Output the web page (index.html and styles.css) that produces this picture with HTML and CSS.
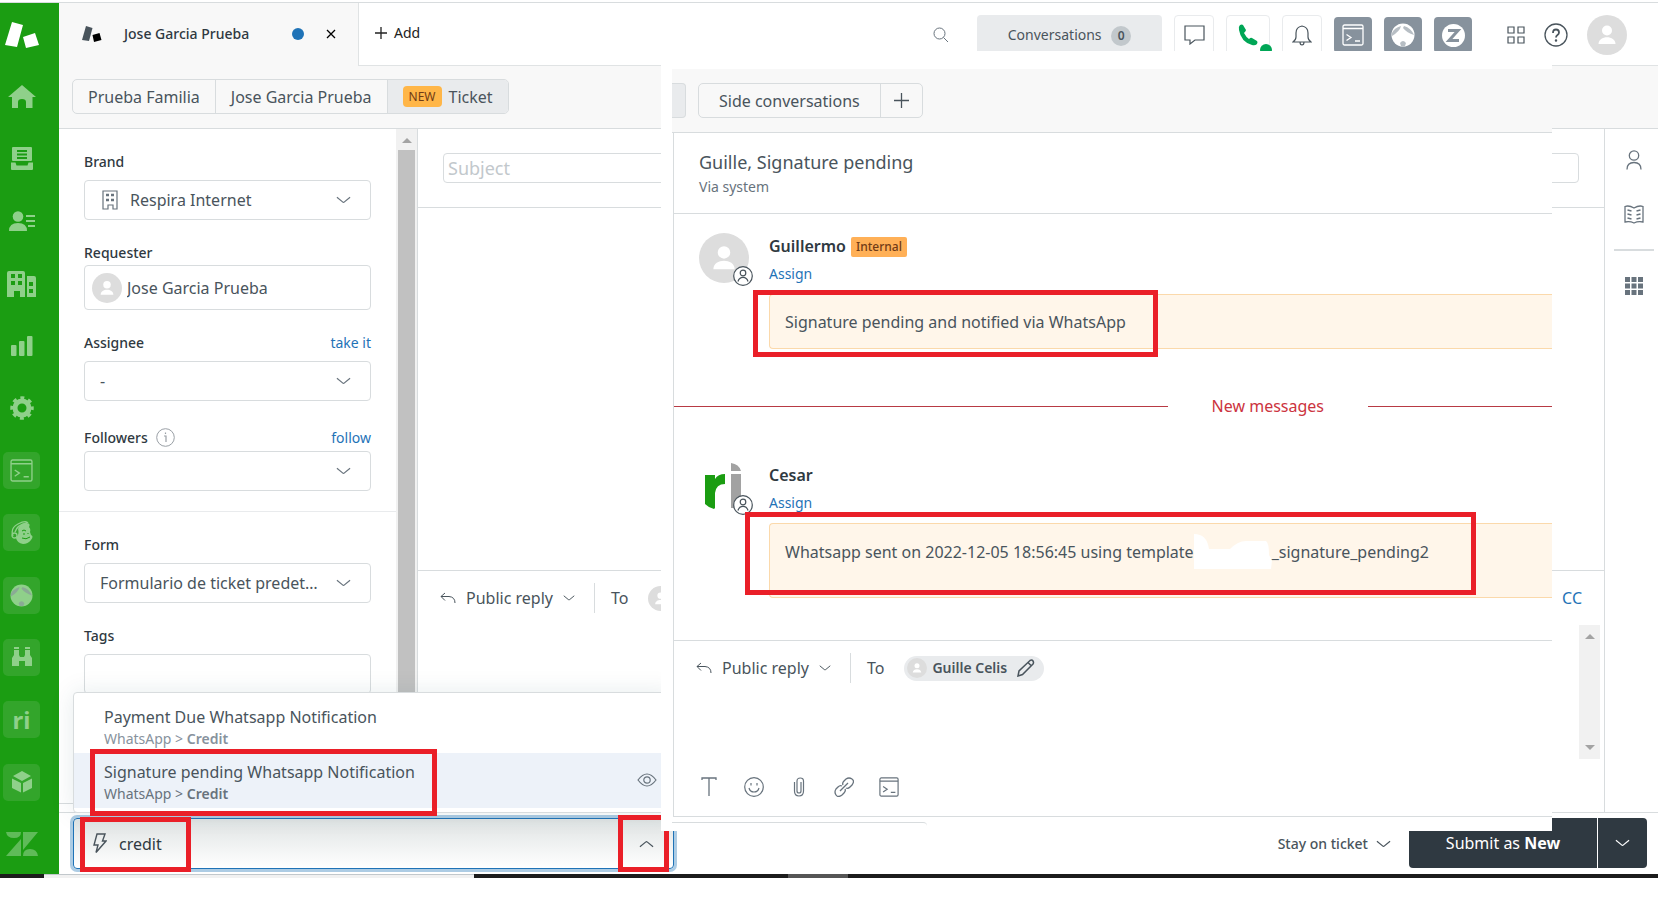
FILE: index.html
```html
<!DOCTYPE html>
<html lang="en">
<head>
  <meta charset="UTF-8" />
  <meta name="viewport" content="width=device-width, initial-scale=1.0"/>
  <title>Jose Garcia Prueba - Ticket</title>
  <link rel="stylesheet" href="styles.css">
</head>
<body>
  <!-- Shared icons -->
  <svg class="sprite" width="0" height="0">
    <symbol id="chevron" viewBox="0 0 16 8"><path d="M1 1 L7 6 Q8 7 9 6 L15 1" fill="none" stroke="currentColor" stroke-width="1.3"/></symbol>
    <symbol id="terminal" viewBox="0 0 22 22"><g fill="none" stroke="currentColor" stroke-width="1.3"><rect x="1" y="1" width="20" height="20" rx="1.5"/><path d="M1 4.500h20M4.500 10.500l4.500 3-4.500 3M13 17h5"/></g></symbol>
    <symbol id="person" viewBox="0 0 40 40"><circle cx="20" cy="20" r="20" fill="#ddd"/><circle cx="20" cy="15.500" r="5" fill="#fff"/><path d="M11.500 29c0-9 17-9 17 0z" fill="#fff"/></symbol>
    <symbol id="user" viewBox="0 0 20 20"><circle cx="10" cy="10" r="9.300" fill="#fff" stroke="#49545c" stroke-width="1.200"/><circle cx="10" cy="7" r="2.800" fill="none" stroke="#49545c" stroke-width="1.200"/><path d="M5 15.500c1.500-5.500 8.500-5.500 10 0" fill="none" stroke="#49545c" stroke-width="1.200"/></symbol>
    <symbol id="reply" viewBox="0 0 16 12"><path d="M5 1 L1 4.500 L5 8.500 M1 4.500 H9 Q15 5 15 11" fill="none" stroke="currentColor"/></symbol>
    <symbol id="globe" viewBox="0 0 24 24"><circle cx="12" cy="12" r="11.500" fill="currentColor"/><path d="M1 10 Q3 5 10 3 Q9 8 1 13zM13 3 Q20 5 23 12 Q16 10 12 5zM9 20q3-4 6 0l-1 3h-4z" class="globe-shade"/></symbol>
  </svg>

  <div class="app">
    <nav class="sidebar">
      <a href="#" class="logo" aria-label="Home"><svg width="34" height="26" viewBox="0 0 34 26" fill="#fff"><path d="M7 0L18 3 12 25 0 23zM18 15L30 11 34 23 21 26z"/></svg></a>
      <a href="#" aria-label="Dashboard"><svg width="28" height="24" viewBox="0 0 28 24" fill="currentColor"><path d="M14 0L28 12H24.500V23H18V17q0-3-4-3t-4 3v6H4V12H0z"/></svg></a>
      <a href="#" aria-label="Views"><svg width="22" height="24" viewBox="0 0 22 24" fill="currentColor"><path fill-rule="evenodd" d="M2 0h18q1 0 1 1v12q0 1-1 1H2q-1 0-1-1V1q0-1 1-1zM6 3v2h10V3zM6 6.500v2h10v-2zM6 10v2h10v-2zM0 15.500h4.500l1 3h11l1-3H22V22q0 1-1 1H1q-1 0-1-1z"/></svg></a>
      <a href="#" aria-label="Customers"><svg width="26" height="20" viewBox="0 0 26 20" fill="currentColor"><circle cx="9" cy="5.500" r="5.300"/><path d="M0 20q0-8 9-8t9 8zM17 4h9v2h-9zM17 9h9v2h-9zM19 14h7v2h-7z"/></svg></a>
      <a href="#" aria-label="Organizations"><svg width="30" height="26" viewBox="0 0 30 26" fill="currentColor"><path fill-rule="evenodd" d="M2 0h14q2 0 2 2v24h-5v-6H7v6H0V2q0-2 2-2zM4 3v4h4V3zM11 3v4h4V3zM4 10v4h4v-4zM11 10v4h4v-4zM20 5h7q2 0 2 2v19h-9zM22 11v4h4v-4zM22 18v4h4v-4z"/></svg></a>
      <a href="#" aria-label="Reporting"><svg width="22" height="20" viewBox="0 0 22 20" fill="currentColor"><rect y="9" width="5.500" height="11" rx="1"/><rect x="8" y="5" width="5.500" height="15" rx="1"/><rect x="16" width="5.500" height="20" rx="1"/></svg></a>
      <a href="#" aria-label="Admin"><svg width="24" height="24" viewBox="0 0 24 24"><circle cx="12" cy="12" r="7" fill="none" stroke="currentColor" stroke-width="5"/><circle cx="12" cy="12" r="10" fill="none" stroke="currentColor" stroke-width="3.500" stroke-dasharray="3.900 3.950" stroke-dashoffset="1.900"/></svg></a>
      <a href="#" class="tile" aria-label="Console"><svg width="23" height="23"><use href="#terminal"/></svg></a>
      <a href="#" class="tile" aria-label="Mailchimp"><svg width="22" height="24" viewBox="0 0 22 24"><g fill="none" stroke="currentColor" stroke-width="1.300"><path d="M2 15Q-1 7 7 3t10-1M4 11Q6 4 16 2"/><circle cx="3.500" cy="14.500" r="2.500"/></g><path fill="currentColor" d="M7 8q2-5 8-6 5 0 3 4 2 2 1 5l1 3q3 1 0 5-3 4-8 4-6-1-7-6l2-3q1-3 0-6z"/><path d="M11 10q2-2 4 0M12 13h2M17 12v1M11 17q4 2 8-1" class="cut"/></svg></a>
      <a href="#" class="tile" aria-label="Browser"><svg width="23" height="23"><use href="#globe"/></svg></a>
      <a href="#" class="tile" aria-label="Search app"><svg width="20" height="20" viewBox="0 0 20 20" fill="currentColor"><path d="M2 0h5v2H2zM13 0h5v2h-5zM2 3h5v5l1 2h4l1-2V3h5v5l2 3v8h-7v-5H7v5H0v-8l2-3z"/></svg></a>
      <a href="#" class="tile ri" aria-label="Respira Internet">ri</a>
      <a href="#" class="tile" aria-label="Products"><svg width="20" height="22" viewBox="0 0 20 22" fill="currentColor"><path d="M10 0L19 5 10 10 1 5zM0 7.500L9 12V21.500L0 17zM20 7.500L11 12V21.500L20 17z"/></svg></a>
      <a href="#" class="zendesk" aria-label="Zendesk"><svg width="32" height="24" viewBox="0 0 32 24" fill="currentColor"><path d="M0 0h15q0 6-7 6T0 0zM15 7v17H0zM17 0h15L17 18zM17 24q0-7 7-7t8 7z"/></svg></a>
    </nav>

    <div class="main">
      <header class="topbar">
        <div class="tab">
          <svg width="20" height="16" viewBox="0 0 20 16"><path d="M4 0L10.500 2 7 15 0 14z" fill="#49545c"/><path d="M10.500 9L17.500 7 19.500 14 12 16z"/></svg>
          <span>Jose Garcia Prueba</span>
          <i class="dot"></i>
          <button aria-label="Close tab"><svg width="10" height="10" viewBox="0 0 10 10"><path d="M1 1l8 8M9 1L1 9" stroke="#000" stroke-width="1.300"/></svg></button>
        </div>
        <button class="add"><svg width="12" height="12" viewBox="0 0 12 12"><path d="M6 0v12M0 6h12" stroke="#222" stroke-width="1.300"/></svg>Add</button>

        <div class="tools">
          <button class="search" aria-label="Search"><svg width="16" height="16" viewBox="0 0 16 16" fill="none" stroke="#68737d"><circle cx="6.500" cy="6.500" r="5.500"/><path d="M10.500 10.500L15 15"/></svg></button>
          <button class="conversations">Conversations <b>0</b></button>
          <button class="box" aria-label="Chat"><svg width="21" height="20" viewBox="0 0 21 20" fill="none" stroke="#49545c" stroke-width="1.200"><path d="M1 1h19v14h-9l-5 4v-4H1z"/></svg></button>
          <button class="box phone" aria-label="Talk"><svg width="22" height="22" viewBox="0 0 22 22" fill="#00a656"><path d="M3 1q2-1 3 0l3 5q0 1-2 3 2 4 5 6 2-2 3-1l5 3q1 1 0 3-2 2-5 1Q4 18 2 6 1 3 3 1z"/></svg><i></i></button>
          <button class="box" aria-label="Notifications"><svg width="20" height="21" viewBox="0 0 20 21" fill="none" stroke="#49545c" stroke-width="1.200"><path d="M1 17q3-2 3-5V8q0-6 6-7 6 1 6 7v4q0 3 3 5zM8 17q0 3 2 3t2-3"/></svg></button>
          <button class="app-icon" aria-label="Console"><svg width="22" height="22"><use href="#terminal"/></svg></button>
          <button class="app-icon" aria-label="Browser"><svg width="24" height="24"><use href="#globe"/></svg></button>
          <button class="app-icon" aria-label="Z"><svg width="23" height="23" viewBox="0 0 23 23"><circle cx="11.500" cy="11.500" r="11.500" fill="#fff"/><path d="M6 6.500h10L7 16.500h10" fill="none" stroke="#87929d" stroke-width="3"/></svg></button>
          <button class="products" aria-label="Products"><svg width="18" height="18" viewBox="0 0 18 18" fill="none" stroke="#49545c" stroke-width="1.200"><path d="M1 1h6v6H1zM11 1h6v6h-6zM1 11h6v6H1zM11 11h6v6h-6z"/></svg></button>
          <button aria-label="Help"><svg width="24" height="24" viewBox="0 0 24 24" fill="none" stroke="#49545c" stroke-width="1.300"><circle cx="12" cy="12" r="11"/><path d="M9 10q0-3.500 3-3.500t3 3q0 1.500-1.500 2.500T12 14.500" stroke-width="1.800"/><circle cx="12" cy="17.500" r=".6"/></svg></button>
          <button aria-label="Profile"><svg width="40" height="40"><use href="#person"/></svg></button>
        </div>
      </header>

      <div class="crumbs">
        <div class="group">
          <button>Prueba Familia</button>
          <button>Jose Garcia Prueba</button>
          <button class="active"><span class="new">NEW</span>Ticket</button>
        </div>
      </div>

      <div class="body">
        <aside class="properties">
          <div class="field">
            <label for="brand">Brand</label>
            <div class="control brand">
              <svg width="16" height="20" viewBox="0 0 16 20" fill="none" stroke="#68737d" stroke-width="1.200"><path d="M6 19H1V1h14v18h-4v-4H6z"/><path d="M4 5h3M9 5h3M4 10h3M9 10h3" stroke-width="2.500"/></svg>
              <select id="brand"><option>Respira Internet</option></select>
              <svg class="chevron" width="15" height="8"><use href="#chevron"/></svg>
            </div>
          </div>
          <div class="field tight">
            <label for="requester">Requester</label>
            <div class="control requester">
              <svg width="30" height="30"><use href="#person"/></svg>
              <input id="requester" type="text" value="Jose Garcia Prueba">
            </div>
          </div>
          <div class="field">
            <div class="label-row"><label for="assignee">Assignee</label><a href="#">take it</a></div>
            <div class="control">
              <select id="assignee"><option>-</option></select>
              <svg class="chevron" width="15" height="8"><use href="#chevron"/></svg>
            </div>
          </div>
          <div class="field">
            <div class="label-row followers">
              <label for="followers">Followers</label>
              <svg width="19" height="19" viewBox="0 0 19 19" fill="none" stroke="#999fa5"><circle cx="9.500" cy="9.500" r="8.800"/><path d="M8 8h2v6M9.500 4.500v1.500" stroke-width="1.200"/></svg>
              <a href="#">follow</a>
            </div>
            <div class="control">
              <select id="followers"><option></option></select>
              <svg class="chevron" width="15" height="8"><use href="#chevron"/></svg>
            </div>
          </div>
          <hr>
          <div class="field">
            <label for="form">Form</label>
            <div class="control">
              <select id="form"><option>Formulario de ticket predeterminado</option></select>
              <svg class="chevron" width="15" height="8"><use href="#chevron"/></svg>
            </div>
          </div>
          <div class="field">
            <label for="tags">Tags</label>
            <div class="control"><input id="tags" type="text"></div>
          </div>
        </aside>
        <div class="scrollbar"><i class="up"></i><span class="thumb"></span></div>

        <section class="ticket">
          <div class="subject"><input type="text" placeholder="Subject" aria-label="Subject"></div>
          <div class="reply">
            <div class="reply-row">
              <button class="channel"><svg width="16" height="12"><use href="#reply"/></svg>Public reply<svg width="12" height="6"><use href="#chevron"/></svg></button>
              <span class="to">To</span>
              <svg class="to-avatar" width="25" height="25"><use href="#person"/></svg>
              <a href="#" class="cc">CC</a>
            </div>
            <div class="scroll-small"><i class="up"></i><i class="down"></i></div>
          </div>
        </section>

        <aside class="rail">
          <button aria-label="User"><svg width="16" height="20" viewBox="0 0 16 20" fill="none" stroke="#68737d" stroke-width="1.300"><circle cx="8" cy="5.500" r="4.700"/><path d="M1 19.500q0-7 7-7t7 7"/></svg></button>
          <button aria-label="Knowledge"><svg width="20" height="19" viewBox="0 0 20 19" fill="none" stroke="#68737d" stroke-width="1.300"><path d="M10 3Q5 0 1 1.500V17q5-1 9 1 4-2 9-1V1.500Q15 0 10 3zM3.500 5l4 1M3.500 9l4 1M3.500 13l4 1M16.500 5l-4 1M16.500 9l-4 1M16.500 13l-4 1"/></svg></button>
          <hr>
          <button aria-label="Apps"><svg width="18" height="18" viewBox="0 0 18 18" fill="#68737d"><path d="M0 0h5v5H0zM6.500 0h5v5h-5zM13 0h5v5h-5zM0 6.500h5v5H0zM6.500 6.500h5v5h-5zM13 6.500h5v5h-5zM0 13h5v5H0zM6.500 13h5v5h-5zM13 13h5v5h-5z"/></svg></button>
        </aside>
      </div>

      <footer class="footer">
        <div class="macro">
          <div class="macro-input">
            <svg width="14" height="21" viewBox="0 0 14 21" fill="none" stroke="#49545c" stroke-width="1.400"><path d="M4 1h8L9.500 8H13L3 19.500 5 12H1z"/></svg>
            <input type="text" value="credit" aria-label="Apply macro">
            <button aria-label="Close macros"><svg class="flip" width="15" height="8"><use href="#chevron"/></svg></button>
          </div>
          <div class="menu">
            <button class="item">
              <span class="name">Payment Due Whatsapp Notification</span>
              <span class="path">WhatsApp &gt; <b>Credit</b></span>
            </button>
            <button class="item selected">
              <span class="name">Signature pending Whatsapp Notification</span>
              <span class="path">WhatsApp &gt; <b>Credit</b></span>
              <svg class="eye" width="20" height="14" viewBox="0 0 20 14" fill="none" stroke="#68737d" stroke-width="1.200"><path d="M1 7q9-12 18 0-9 12-18 0z"/><circle cx="10" cy="7" r="3.200"/></svg>
              <i class="mark mark-item"></i>
            </button>
          </div>
          <i class="mark mark-text"></i>
          <i class="mark mark-arrow"></i>
        </div>
        <button class="stay">Stay on ticket <svg width="15" height="8"><use href="#chevron"/></svg></button>
        <button class="submit">Submit as <b>New</b></button>
        <button class="submit-more" aria-label="More submit options"><svg width="15" height="8"><use href="#chevron"/></svg></button>
      </footer>
    </div>

    <!-- Side conversation panel, floats over the ticket -->
    <section class="panel">
      <div class="panel-tabs">
        <span class="stub"></span>
        <div class="group">
          <button>Side conversations</button>
          <button class="plus" aria-label="New side conversation"><svg width="15" height="15" viewBox="0 0 15 15"><path d="M7.500 0v15M0 7.500h15" stroke="#49545c" stroke-width="1.300"/></svg></button>
        </div>
      </div>
      <div class="panel-main">
        <div class="panel-title">
          <h1>Guille, Signature pending</h1>
          <p>Via system</p>
        </div>
        <div class="thread">
          <article class="message">
            <div class="avatar"><svg width="50" height="50"><use href="#person"/></svg><svg class="role" width="20" height="20"><use href="#user"/></svg></div>
            <div class="content">
              <h2>Guillermo <span class="internal">Internal</span></h2>
              <a href="#">Assign</a>
              <div class="note">Signature pending and notified via WhatsApp<i class="mark mark-first"></i></div>
            </div>
          </article>
          <div class="divider"><span>New messages</span></div>
          <article class="message">
            <div class="avatar"><svg width="50" height="50" viewBox="0 0 50 50"><path d="M6 13h10v4q3-5 10-5v10q-9 0-10 9v15l-1 1q-5-1-9-5z" fill="#1b9d12"/><path d="M32 1q8 1 10 8H32zM32 12h10v34H32z" fill="#a2a2a2"/></svg><svg class="role" width="20" height="20"><use href="#user"/></svg></div>
            <div class="content">
              <h2>Cesar</h2>
              <a href="#">Assign</a>
              <div class="note tall"><span>Whatsapp sent on 2022-12-05 18:56:45 using template</span><svg width="78" height="36" viewBox="0 0 78 36"><path d="M0 0q13 0 15 15h21q8-8 16-8h20q3 2 3 14l3 5-1 9H0z" fill="#fff"/></svg><span>_signature_pending2</span><i class="mark mark-second"></i></div>
            </div>
          </article>
        </div>
        <div class="composer">
          <div class="reply-row">
            <button class="channel"><svg width="16" height="12"><use href="#reply"/></svg>Public reply<svg width="12" height="6"><use href="#chevron"/></svg></button>
            <span class="to">To</span>
            <button class="pill"><svg width="20" height="20"><use href="#person"/></svg>Guille Celis<svg width="18" height="18" viewBox="0 0 18 18" fill="none" stroke="#49545c" stroke-width="1.500"><path d="M1 17l1-5L13 1.500q2-1 3 .5t0 3L5.500 15.500zM11 3.500L14.500 7"/></svg></button>
          </div>
          <div class="editor-tools">
            <button aria-label="Text"><svg width="20" height="20" viewBox="0 0 20 20" fill="none" stroke="currentColor" stroke-width="1.300"><path d="M3 3V1h14v2M10 1v18"/></svg></button>
            <button aria-label="Emoji"><svg width="20" height="20" viewBox="0 0 20 20" fill="none" stroke="currentColor" stroke-width="1.200"><circle cx="10" cy="10" r="9.300"/><path d="M5 11q1 4 5 4t5-4M7 6v2.500M13 6v2.500"/></svg></button>
            <button aria-label="Attach"><svg width="20" height="20" viewBox="0 0 20 20" fill="none" stroke="currentColor" stroke-width="1.200"><path d="M5.500 5v9q0 5 4.500 5t4.500-5V4q0-3-3.200-3T8 4v10q0 2 2 2t2-2V5"/></svg></button>
            <button aria-label="Link"><svg width="20" height="20" viewBox="0 0 20 20" fill="none" stroke="currentColor" stroke-width="1.300"><path d="M6 14l8-8M9 8q-1-2 1-4l2-2q3-2 6 0t0 6l-2 2q-2 2-4 1M8 9q-2-1-4 1l-2 2q-2 3 0 6t6 0l2-2q2-2 1-4"/></svg></button>
            <button aria-label="Apps"><svg width="20" height="20"><use href="#terminal"/></svg></button>
          </div>
        </div>
      </div>
      <div class="panel-end"></div>
    </section>
  </div>
  <div class="taskbar"><span class="light"></span><span class="dark"></span><span class="gray"></span></div>
</body>
</html>
```

FILE: styles.css
```css
* {
  box-sizing: border-box;
}

body {
  margin: 0;
  padding: 2px 19px 0 0;
  font-family: "Noto Sans", "Open Sans", sans-serif;
  font-size: 16px;
  line-height: 22px;
  background: #fff;
  color: #49545c;
}

button, input, select {
  font: inherit;
  color: inherit;
  background: none;
  border: none;
  padding: 0;
  margin: 0;
  outline: none;
}

button {
  cursor: pointer;
}

svg {
  display: block;
  flex: none;
}

a {
  color: #1f73b7;
  text-decoration: none;
}

.sprite {
  position: absolute;
}

.globe-shade {
  fill: #87929d;
  opacity: 0.6;
}

.app {
  position: relative;
  display: flex;
  height: calc(100vh - 45px);
  min-height: 780px;
  border-top: 1px solid #d8dcde;
}

/* Sidebar */
.sidebar {
  width: 59px;
  flex: none;
  background: #1b9d12;
  display: flex;
  flex-direction: column;
  justify-content: space-between;
  padding: 13px 0 11px 3px;
}

.sidebar a {
  width: 37px;
  height: 37px;
  display: flex;
  align-items: center;
  justify-content: center;
  color: #8fd08a;
}

.sidebar .tile {
  background: #33a52b;
  border-radius: 5px;
}

.sidebar .globe-shade {
  fill: #1b9d12;
}

.sidebar .ri {
  font-size: 24px;
  font-weight: 700;
}

.sidebar .zendesk {
  color: #5fbb59;
}

.cut {
  fill: none;
  stroke: #1b9d12;
}

.main {
  flex: 1;
  min-width: 0;
  display: flex;
  flex-direction: column;
}

/* Top bar */
.topbar {
  display: flex;
  height: 63px;
  flex: none;
}

.tab {
  width: 300px;
  flex: none;
  background: #f8f8f8;
  border-right: 1px solid #e0e3e4;
  display: flex;
  align-items: center;
  padding: 0 22px 2px 23px;
  font-size: 14px;
  font-weight: 500;
  color: #2f3941;
}

.tab span {
  margin-left: 22px;
}

.dot {
  width: 12px;
  height: 12px;
  border-radius: 50%;
  background: #1f73b7;
  margin-left: auto;
}

.tab button {
  margin: 0 0 0 22px;
}

.add {
  display: flex;
  align-items: center;
  gap: 7px;
  padding: 0 16px 2px;
  font-size: 14px;
  color: #222;
}

.topbar > .add,
.tools {
  border-bottom: 1px solid #e0e3e4;
}

.tools {
  flex: 1;
  display: flex;
  align-items: center;
  justify-content: flex-end;
  gap: 12px;
  padding: 2px 31px 0 0;
}

.search {
  margin-right: 16px;
}

.conversations {
  width: 185px;
  height: 40px;
  background: #e9ebed;
  border-radius: 4px;
  font-size: 14px;
}

.conversations b {
  display: inline-block;
  width: 20px;
  line-height: 20px;
  margin-left: 6px;
  border-radius: 50%;
  background: #c2c8cc;
  font-size: 12px;
  font-weight: 600;
}

.box {
  width: 40px;
  height: 40px;
  border: 1px solid #e9ebed;
  border-radius: 4px;
  display: flex;
  align-items: center;
  justify-content: center;
}

.phone {
  position: relative;
  width: 44px;
}

.phone i {
  position: absolute;
  right: -3px;
  bottom: -2px;
  width: 12px;
  height: 12px;
  border-radius: 50%;
  background: #00a656;
}

.app-icon {
  width: 38px;
  height: 36px;
  border-radius: 4px;
  background: #87929d;
  color: #fff;
  display: flex;
  align-items: center;
  justify-content: center;
}

.products {
  margin: 0 7px 0 23px;
}

.tools button:last-child {
  margin-left: 7px;
}

/* Breadcrumbs */
.crumbs {
  height: 63px;
  flex: none;
  background: #f8f8f8;
  border-bottom: 1px solid #d8dcde;
  padding: 13px;
}

.group {
  display: inline-flex;
  height: 35px;
  border: 1px solid #d8dcde;
  border-radius: 5px;
  overflow: hidden;
}

.group button {
  display: flex;
  align-items: center;
  padding: 0 15px;
}

.group button + button {
  border-left: 1px solid #d8dcde;
}

.group .active {
  background: #e9ebed;
}

.new {
  background: #ffb648;
  color: #703b15;
  font-size: 12px;
  line-height: 21px;
  padding: 0 6px;
  border-radius: 4px;
  margin-right: 7px;
}

.body {
  flex: 1;
  min-height: 0;
  display: flex;
}

/* Ticket properties */
.properties {
  width: 337px;
  flex: none;
  overflow: hidden;
  padding-top: 23px;
  margin-bottom: 8px;
  border-bottom: 1px solid #d8dcde;
}

.field {
  padding: 0 25px;
  margin-bottom: 23px;
}

.field label {
  display: block;
  font-size: 14px;
  font-weight: 500;
  line-height: 20px;
  margin-bottom: 8px;
  color: #2f3941;
}

.tight label {
  margin-bottom: 2px;
}

.label-row {
  display: flex;
  align-items: center;
  font-size: 14px;
  line-height: 20px;
  margin-bottom: 8px;
}

.label-row label {
  margin: 0;
}

.label-row a {
  margin-left: auto;
}

.followers {
  height: 27px;
  gap: 8px;
  margin-bottom: 0;
}

.control {
  display: flex;
  align-items: center;
  height: 40px;
  border: 1px solid #d8dcde;
  border-radius: 4px;
  padding: 0 19px 0 15px;
  gap: 12px;
}

.control select,
.control input {
  flex: 1;
  min-width: 0;
  appearance: none;
  text-overflow: ellipsis;
  overflow: hidden;
  white-space: nowrap;
}

.brand {
  padding-left: 17px;
}

.requester {
  height: 45px;
  padding: 0 7px;
  gap: 5px;
}

.chevron {
  color: #68737d;
}

.properties hr {
  border: none;
  border-top: 1px solid #e9ebed;
  margin: -3px 0 23px;
}

.scrollbar {
  width: 21px;
  flex: none;
  background: #f1f1f1;
  padding: 9px 2px 0;
  display: flex;
  flex-direction: column;
  align-items: center;
  gap: 7px;
}

.thumb {
  flex: 1;
  align-self: stretch;
  background: #c1c1c1;
}

.up, .down {
  border: 5px solid transparent;
  border-top: none;
  border-bottom-color: #a3a3a3;
}

.down {
  border: 5px solid transparent;
  border-bottom: none;
  border-top-color: #a3a3a3;
}

/* Ticket */
.ticket {
  flex: 1;
  min-width: 0;
  display: flex;
  flex-direction: column;
  border-left: 1px solid #d8dcde;
}

.subject {
  padding: 24px 25px;
  border-bottom: 1px solid #d8dcde;
}

.subject input {
  display: block;
  width: 100%;
  height: 30px;
  border: 1px solid #d8dcde;
  border-radius: 4px;
  padding: 0 4px;
  font-size: 18px;
}

.subject input::placeholder {
  color: #c2c8cc;
}

.reply {
  height: 242px;
  margin-top: auto;
  border-top: 1px solid #d8dcde;
  display: flex;
  flex-direction: column;
}

.reply-row {
  display: flex;
  align-items: center;
  height: 54px;
  padding: 0 22px;
}

.channel {
  display: flex;
  align-items: center;
  gap: 10px;
}

.to {
  margin-left: 19px;
  padding-left: 16px;
  border-left: 1px solid #d8dcde;
  line-height: 30px;
}

.to-avatar {
  margin-left: 20px;
}

.cc {
  margin-left: auto;
}

.scroll-small {
  align-self: flex-end;
  width: 21px;
  height: 134px;
  margin-right: 4px;
  background: #f1f1f1;
  display: flex;
  flex-direction: column;
  align-items: center;
  justify-content: space-between;
  padding: 9px 0;
}

.rail {
  width: 54px;
  flex: none;
  border-left: 1px solid #d8dcde;
  display: flex;
  flex-direction: column;
  align-items: center;
  gap: 26px;
  padding: 17px 0 0 4px;
}

.rail button {
  height: 28px;
  display: flex;
  align-items: center;
}

.rail hr {
  width: 40px;
  margin: -5px 0;
  border: none;
  border-top: 2px solid #d8dcde;
}

/* Footer */
.footer {
  height: 62px;
  flex: none;
  border-top: 1px solid #d8dcde;
  display: flex;
  align-items: flex-start;
  padding: 5px 11px 0 14px;
}

.macro {
  position: relative;
  width: 601px;
}

.macro-input {
  display: flex;
  align-items: center;
  gap: 12px;
  height: 51px;
  padding: 0 19px;
  border: 1px solid #1f73b7;
  border-radius: 4px;
  box-shadow: 0 0 0 3px #adcce4;
  background: linear-gradient(#dfe3e3, #fff);
}

.macro-input input {
  flex: 1;
  color: #2f3941;
}

.flip {
  transform: rotate(180deg);
}

.menu {
  position: absolute;
  left: 0;
  right: 0;
  bottom: 56px;
  padding: 5px 0 4px;
  background: #fff;
  border: 1px solid #d8dcde;
  border-radius: 4px;
  box-shadow: 0 0 24px rgba(23, 73, 77, 0.1);
}

.item {
  position: relative;
  display: block;
  width: 100%;
  padding: 8px 30px 3px;
  text-align: left;
}

.item span {
  display: block;
}

.selected {
  background: #edf2f9;
}

.path {
  font-size: 14px;
  color: #87929d;
}

.path b {
  font-weight: 600;
}

.selected .path {
  color: #68737d;
}

.eye {
  position: absolute;
  right: 16px;
  top: 20px;
}

.stay {
  display: flex;
  align-items: center;
  gap: 8px;
  height: 51px;
  margin-left: auto;
  margin-right: 18px;
  font-size: 14px;
  font-weight: 500;
}

.submit {
  width: 188px;
  height: 50px;
  background: #2f3941;
  color: #fff;
  border-radius: 4px 0 0 4px;
}

.submit-more {
  width: 49px;
  height: 50px;
  margin-left: 1px;
  background: #2f3941;
  color: #fff;
  border-radius: 0 4px 4px 0;
  display: flex;
  align-items: center;
  justify-content: center;
}

/* Red callout frames */
.mark {
  position: absolute;
  border: 5px solid #ea1f28;
  pointer-events: none;
}

.mark-item {
  left: 16px;
  top: -4px;
  width: 347px;
  height: 67px;
}

.mark-text {
  left: 7px;
  top: -1px;
  width: 111px;
  height: 55px;
}

.mark-arrow {
  right: 5px;
  top: -3px;
  width: 51px;
  height: 57px;
}

.mark-first {
  left: -17px;
  top: -5px;
  width: 405px;
  height: 67px;
}

.mark-second {
  left: -25px;
  top: -12px;
  width: 731px;
  height: 83px;
}

/* Side conversation */
.panel {
  position: absolute;
  left: 661px;
  right: 106px;
  top: 48px;
  bottom: 43px;
  background: #fff;
  display: flex;
  flex-direction: column;
  padding: 18px 0 0 11px;
}

.panel-tabs {
  display: flex;
  gap: 12px;
  height: 64px;
  flex: none;
  padding-top: 14px;
  background: #f8f8f8;
  border-bottom: 1px solid #d8dcde;
}

.stub {
  width: 14px;
  height: 35px;
  background: #e9ebed;
  border: 1px solid #d8dcde;
  border-left: none;
  border-radius: 0 4px 4px 0;
}

.panel-tabs .group button {
  padding: 0 20px;
}

.panel-tabs .group .plus {
  padding: 0 13px;
}

.panel-main {
  flex: 1;
  min-height: 0;
  display: flex;
  flex-direction: column;
  margin-left: 1px;
  border-left: 1px solid #d8dcde;
  border-bottom: 1px solid #d8dcde;
}

.panel-title {
  padding: 16px 25px 14px;
  border-bottom: 1px solid #d8dcde;
}

.panel-title h1 {
  margin: 0;
  font-size: 18px;
  line-height: 26px;
  font-weight: 400;
}

.panel-title p {
  margin: 0;
  font-size: 14px;
  line-height: 24px;
  color: #68737d;
}

.thread {
  flex: 1;
  min-height: 0;
}

.message {
  display: flex;
  gap: 20px;
  padding: 19px 0 0 25px;
}

.avatar {
  position: relative;
  height: 50px;
}

.role {
  position: absolute;
  right: -4px;
  bottom: -3px;
}

.content {
  flex: 1;
  min-width: 0;
}

.content h2 {
  display: flex;
  align-items: center;
  gap: 5px;
  margin: 0;
  font-size: 16px;
  line-height: 27px;
  font-weight: 600;
  color: #2f3941;
}

.content a {
  display: block;
  font-size: 14px;
  line-height: 27px;
}

.internal {
  background: #ffb057;
  color: #703b15;
  font-size: 12px;
  line-height: 20px;
  font-weight: 500;
  padding: 0 5px;
  border-radius: 2px;
}

.note {
  position: relative;
  display: flex;
  align-items: center;
  height: 55px;
  margin-top: 7px;
  padding: 0 15px;
  background: #fff6ea;
  border: 1px solid #fbd9ab;
  border-right: none;
  border-radius: 4px 0 0 4px;
  white-space: nowrap;
}

.tall {
  height: 75px;
  padding-bottom: 18px;
}

.divider {
  display: flex;
  align-items: center;
  gap: 44px;
  margin-top: 46px;
  margin-bottom: 26px;
  color: #cc3340;
}

.divider::before,
.divider::after {
  content: "";
  border-top: 1px solid #b83a44;
  flex: 491;
}

.divider::after {
  flex: 183;
}

.composer {
  height: 176px;
  border-top: 1px solid #d8dcde;
  display: flex;
  flex-direction: column;
}

.pill {
  display: flex;
  align-items: center;
  gap: 5px;
  height: 25px;
  margin-left: 20px;
  padding: 0 9px 0 3px;
  border-radius: 13px;
  background: #e9ebed;
  font-size: 14px;
  font-weight: 600;
}

.pill svg:last-child {
  margin-left: 5px;
}

.editor-tools {
  display: flex;
  gap: 25px;
  margin-top: auto;
  padding: 0 25px 19px;
  color: #68737d;
}

.panel-end {
  width: 255px;
  height: 9px;
  margin-top: 5px;
  flex: none;
  border-top: 1px solid #d8dcde;
  border-top-right-radius: 4px;
}

/* Taskbar edge */
.taskbar {
  display: flex;
  height: 4px;
  background: #1c1c1c;
}

.light {
  width: 430px;
  margin-left: 44px;
  background: #f1f1f1;
  border-top: 1px solid #c2c8cc;
}

.dark {
  width: 314px;
}

.gray {
  width: 60px;
  background: #555;
}
```
